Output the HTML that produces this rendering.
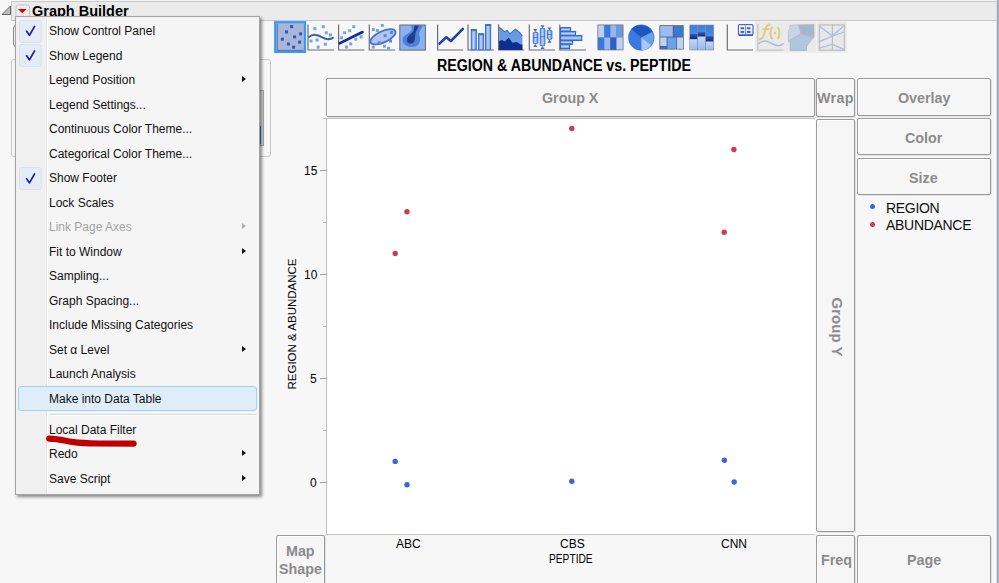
<!DOCTYPE html>
<html><head><meta charset="utf-8">
<style>
*{box-sizing:border-box;margin:0;padding:0}
html,body{width:999px;height:583px;overflow:hidden;background:#f7f7f7;font-family:"Liberation Sans",sans-serif;color:#000}
.a{position:absolute}
.t{position:absolute;white-space:nowrap;line-height:12px;font-size:12px}
.tb{position:absolute;white-space:nowrap;line-height:14px;font-size:14px;font-weight:bold}
.dz{position:absolute;border-radius:2px;border:1px solid #9a9a9a;box-shadow:inset 1px 1px 0 #fdfdfd,1px 1px 0 #e2e2e2;background:#f6f6f6}
.dzt{position:absolute;white-space:nowrap;line-height:14px;font-size:14.3px;font-weight:bold;color:#8b8b8b}
.mi{position:absolute;left:49px;white-space:nowrap;line-height:12px;font-size:12px;color:#111}
.chk{position:absolute;left:19px;width:23px;height:23px;border:1px solid #d9e1ee;border-radius:3px;background:#e6ecf5}
.arr{position:absolute;left:242px;width:0;height:0;border-top:3.5px solid transparent;border-bottom:3.5px solid transparent;border-left:4.8px solid #101010}
</style></head><body>

<!-- window right edge -->
<div class="a" style="left:996px;top:0;width:1px;height:583px;background:#dcdcdc"></div><div class="a" style="left:997px;top:0;width:2px;height:583px;background:#a2aebb"></div>

<!-- header bar -->
<div class="a" style="left:11px;top:1px;width:986px;height:20px;background:#ebebeb;border:1px solid #c9c9c9;border-right:1px solid #d8d8d8"></div>
<svg class="a" style="left:0;top:0" width="32" height="20">
  <polygon points="10.5,6 10.5,14.5 2,14.5" fill="#bdbdbd" stroke="#6a6a6a" stroke-width="1"/>
  <rect x="16" y="5" width="13.5" height="14" rx="2" fill="#ededed" stroke="#c4c4c4"/>
  <polygon points="18,9 26.5,9 22.25,13.3" fill="#e00000"/>
</svg>
<div class="tb" style="left:32px;top:4px;color:#000;font-size:14.5px">Graph Builder</div>

<!-- left control panel remnants -->
<div class="a" style="left:11px;top:59px;width:260px;height:98px;border:1px solid #c8c8c8;border-radius:3px"></div>
<div class="a" style="left:13px;top:25px;width:6px;height:22px;border:1px solid #8a8a8a;border-radius:3px"></div>
<div class="a" style="left:240px;top:90px;width:24px;height:56px;border:1px solid #a8a8a8;background:#dcdcdc"></div>
<div class="a" style="left:259px;top:126px;width:2px;height:18px;background:#3070d0"></div>

<!-- toolbar icons -->
<svg class="a" style="left:0;top:0" width="860" height="60">
  <defs>
    <linearGradient id="barg" x1="0" x2="1" y1="0" y2="0">
      <stop offset="0" stop-color="#6594e6"/><stop offset="0.45" stop-color="#bcd4fb"/><stop offset="1" stop-color="#6594e6"/>
    </linearGradient>
    <linearGradient id="hbarg" x1="0" x2="0" y1="0" y2="1">
      <stop offset="0" stop-color="#5a8ae2"/><stop offset="0.5" stop-color="#bcd4fb"/><stop offset="1" stop-color="#5a8ae2"/>
    </linearGradient>
  </defs>
  <!-- 1 selected points -->
  <rect x="275.2" y="22.2" width="29.8" height="29.7" fill="#a9b6d8" stroke="#3399ff" stroke-width="2.2"/>
  <path d="M277.3 24 V50.4 H303.6" fill="none" stroke="#6a7190" stroke-width="1"/>
  <g fill="#2b58c0">
    <rect x="290.1" y="25.1" width="3" height="3"/><rect x="285" y="30.4" width="3" height="3"/>
    <rect x="299.1" y="32.4" width="3" height="3"/><rect x="293.1" y="35.4" width="3" height="3"/>
    <rect x="280.9" y="37.7" width="3" height="3"/><rect x="298.1" y="40.6" width="3" height="3"/>
    <rect x="287" y="42.5" width="3" height="3"/><rect x="292.1" y="45.7" width="3" height="3"/>
  </g>
  <!-- axes for plain icons -->
  <g fill="none" stroke="#6e6e6e" stroke-width="1.2">
    <path d="M308 24.4 V50 H334"/>
    <path d="M338.6 24.4 V50 H364.3"/>
    <path d="M369.3 24.4 V50 H395"/>
    <path d="M437.6 24.4 V50 H463.2"/>
    <path d="M468 24.4 V50 H494"/>
    <path d="M498.6 24.4 V50 H524.2"/>
    <path d="M529.3 24.4 V50 H555"/>
    <path d="M559.8 24.4 V50 H586"/>
    <path d="M727.3 24.4 V50 H753"/>
  </g>
  <!-- 2 smoother -->
  <g fill="#7ba2e2">
    <rect x="313.4" y="27.2" width="3" height="3"/><rect x="321.7" y="25.2" width="3" height="3"/>
    <rect x="324.8" y="31.3" width="3" height="3"/><rect x="328.9" y="33.4" width="3" height="3"/>
    <rect x="309.5" y="39.5" width="3" height="3"/><rect x="315.6" y="38.5" width="3" height="3"/>
    <rect x="323.8" y="42.7" width="3" height="3"/><rect x="316.6" y="45.6" width="3" height="3"/>
  </g>
  <path d="M308.3 37.5 C311 35.2 314 34.6 316 34.9 C321 35.5 324 39.3 328 39.2 C330.5 39.1 332 38.6 333.6 37.4" fill="none" stroke="#3a5fb2" stroke-width="2"/>
  <!-- 3 line fit -->
  <g fill="#7ba2e2">
    <rect x="352.3" y="25.2" width="3" height="3"/><rect x="348.2" y="29.3" width="3" height="3"/>
    <rect x="343.1" y="31.3" width="3" height="3"/><rect x="340" y="36.3" width="3" height="3"/>
    <rect x="359.6" y="35.4" width="3" height="3"/><rect x="354.3" y="37.7" width="3" height="3"/>
    <rect x="349.2" y="42.4" width="3" height="3"/><rect x="345" y="45.5" width="3" height="3"/>
  </g>
  <path d="M339.5 43.3 L362.5 32" fill="none" stroke="#0c2c9c" stroke-width="2.6" stroke-linecap="round"/>
  <!-- 4 ellipse -->
  <g fill="#7ba2e2">
    <rect x="380.8" y="24" width="3" height="3"/><rect x="371.8" y="28.1" width="3" height="3"/>
    <rect x="375.9" y="29" width="3" height="3"/><rect x="382.9" y="44.7" width="3" height="3"/>
    <rect x="371.8" y="45.6" width="3" height="3"/><rect x="387" y="46.8" width="3" height="3"/>
  </g>
  <ellipse cx="383" cy="36.8" rx="13.6" ry="5.6" transform="rotate(-25 383 36.8)" fill="#b4c6f0" stroke="#3a72e0" stroke-width="1.8"/>
  <g fill="#5c88dc">
    <rect x="389.9" y="31" width="3" height="3"/><rect x="383.7" y="34.2" width="3" height="3"/>
    <rect x="389" y="39.5" width="3" height="3"/><rect x="377.6" y="41.2" width="3" height="3"/>
  </g>
  <!-- 5 contour -->
  <rect x="399.8" y="25" width="25.6" height="25.1" fill="#8ab0f2" stroke="#6c6c6c" stroke-width="1"/>
  <path d="M410.9 25.5 H423.2 C421.5 29 419.5 31 419.1 33.3 C418.6 35 420.5 37.5 420.1 40 C419.8 42.5 418.6 44.6 416.5 46 C413.4 47.6 408.3 47.4 405.5 45.3 C403 43.6 402.2 41 402.4 39.5 C402.8 37 404 36 406 34.8 C409 33 411 31.5 411.8 29.5 C412 28 411.5 26.5 410.9 25.5 Z" fill="#4f80dc"/>
  <path d="M414.5 25.5 H419.1 C418 28 416.5 30 416 31.5 C415 34 415.2 36.5 415 38.4 C414.8 40.5 414 42.5 411.4 43.6 C409.2 44 407.8 43 407.2 41.5 C406.6 39.5 407.2 37.5 408.5 36 C410.5 34 413 32.5 413.6 30.5 C414 29 414.2 27 414.5 25.5 Z" fill="#1d3f8c"/>
  <!-- 6 line chart -->
  <path d="M439.5 43.6 L446.3 37.2 L450.9 41 L462.9 28.8" fill="none" stroke="#1a40b0" stroke-width="2.5" stroke-linecap="round" stroke-linejoin="round"/>
  <!-- 7 bars -->
  <g stroke="#3f70d8" stroke-width="1.1" fill="url(#barg)">
    <rect x="471.3" y="29.8" width="5" height="20"/>
    <rect x="478.6" y="33.9" width="5" height="15.9"/>
    <rect x="485.6" y="24.6" width="5" height="25.2"/>
  </g>
  <g fill="#3a6cd4"><rect x="470.8" y="29.3" width="6" height="1.8"/><rect x="478.1" y="33.4" width="6" height="1.8"/><rect x="485.1" y="24.1" width="6" height="1.8"/></g>
  <!-- 8 area -->
  <path d="M499.1 27.3 L504.3 31.7 L507.3 30.5 L509.9 34 L515.4 29.3 L519.5 32.5 L522.4 35.8 V50 H499.1 Z" fill="#6a9ae2"/>
  <path d="M499.1 27.3 L504.3 31.7 L507.3 30.5 L509.9 34 L515.4 29.3 L519.5 32.5 L522.4 35.8" fill="none" stroke="#3a70d8" stroke-width="1.2"/>
  <path d="M499.1 41 L502 40.1 L504.6 41.6 L508.7 37.8 L512.5 42.8 L516.6 41.9 L520.7 44.5 L522.4 44.5 V50 H499.1 Z" fill="#0b2f8a"/>
  <!-- 9 box plots -->
  <g fill="#3a6cd4">
    <path d="M533.3 29.1 H537.3 L535.3 32 Z M533.3 47 H537.3 L535.3 44 Z"/>
    <path d="M540.5 25.3 H544.5 L542.5 28.3 Z M540.5 49.1 H544.5 L542.5 46 Z"/>
    <path d="M547.5 27.4 H551.5 L549.5 30.3 Z M547.5 42.7 H551.5 L549.5 39.5 Z"/>
  </g>
  <g fill="url(#barg)" stroke="#3a70d8" stroke-width="1">
    <rect x="533.3" y="32.3" width="4.6" height="11.3" rx="1"/>
    <rect x="540.3" y="28.3" width="4.6" height="17.4" rx="1"/>
    <rect x="547.3" y="30.3" width="4.6" height="9" rx="1"/>
  </g>
  <g stroke="#3a70d8" stroke-width="0.8"><path d="M533.3 37.5 H538 M540.3 36.7 H545 M547.3 34.5 H552"/></g>
  <!-- 10 histogram -->
  <g fill="url(#hbarg)" stroke="#3468d4" stroke-width="1.2">
    <rect x="560.5" y="27.6" width="10" height="3.8"/>
    <rect x="560.5" y="31.5" width="15" height="4"/>
    <rect x="560.5" y="35.6" width="21.2" height="4.8"/>
    <rect x="560.5" y="40.5" width="12" height="3.7"/>
    <rect x="560.5" y="44.3" width="9" height="4.3"/>
  </g>
  <!-- 11 heatmap -->
  <rect x="597.4" y="24.5" width="26.1" height="25.8" fill="#777"/>
  <rect x="598.2" y="25.3" width="6.2" height="12.3" fill="#b8d0fa"/>
  <rect x="604.3" y="25.3" width="6.1" height="12.3" fill="#3a7ae0"/>
  <rect x="610.4" y="25.3" width="6.1" height="12.3" fill="#94b8f0"/>
  <rect x="616.5" y="25.3" width="6.2" height="12.3" fill="#6a98e0"/>
  <rect x="598.2" y="37.5" width="6.2" height="12" fill="#3a78e0"/>
  <rect x="604.3" y="37.5" width="6.1" height="12" fill="#94b8f0"/>
  <rect x="610.4" y="37.5" width="6.1" height="12" fill="#2f5fc0"/>
  <rect x="616.5" y="37.5" width="6.2" height="12" fill="#b8d2fa"/>
  <!-- 12 pie -->
  <g transform="translate(641.3 37.6)">
    <circle r="13.1" fill="#3a7ae0"/>
    <path d="M0 0 L-10 -8.5 A13.1 13.1 0 0 1 11 -5.7 Z" fill="#1f55c0"/>
    <path d="M0 0 L11 -5.7 A13.1 13.1 0 0 1 9.8 7.5 Z" fill="#6aa2e8"/>
    <path d="M0 0 L9.8 7.5 A13.1 13.1 0 0 1 0.3 13.1 Z" fill="#a8c8fa"/>
  </g>
  <!-- 13 treemap -->
  <rect x="659.4" y="25.2" width="24.3" height="24.3" fill="#5a5a5a"/>
  <rect x="660.2" y="26" width="12.6" height="10.6" fill="#9abcf0"/>
  <rect x="673.7" y="26" width="9.3" height="10.6" fill="#3a78d8"/>
  <rect x="660.2" y="37.4" width="6.4" height="8.6" fill="#b8d2fa"/>
  <rect x="660.2" y="46.6" width="6.4" height="2.2" fill="#3070d0"/>
  <rect x="667.4" y="37.4" width="8.8" height="11.4" fill="#6aa0f0"/>
  <rect x="676.9" y="37.4" width="6.1" height="11.4" fill="#b8d2fa"/>
  <!-- 14 mosaic -->
  <linearGradient id="mt" x1="0" x2="0" y1="0" y2="1"><stop offset="0" stop-color="#3a7ce0"/><stop offset="1" stop-color="#4a8ae8"/></linearGradient>
  <linearGradient id="md" x1="0" x2="0" y1="0" y2="1"><stop offset="0" stop-color="#2a58b8"/><stop offset="1" stop-color="#0a2a88"/></linearGradient>
  <linearGradient id="ml" x1="0" x2="0" y1="0" y2="1"><stop offset="0" stop-color="#c4dafc"/><stop offset="1" stop-color="#98b8f0"/></linearGradient>
  <rect x="689.4" y="24.7" width="24.5" height="25.6" fill="#8a8a8a"/>
  <g>
    <rect x="690" y="25.3" width="7.2" height="8.8" fill="url(#mt)"/>
    <rect x="690" y="34" width="7.2" height="5.3" fill="url(#md)"/>
    <rect x="690" y="39.3" width="7.2" height="10.4" fill="url(#ml)"/>
    <rect x="697.9" y="25.3" width="7.2" height="7" fill="url(#mt)"/>
    <rect x="697.9" y="32.3" width="7.2" height="4.4" fill="url(#md)"/>
    <rect x="697.9" y="36.6" width="7.2" height="13.1" fill="url(#ml)"/>
    <rect x="705.9" y="25.3" width="7.4" height="11" fill="url(#mt)"/>
    <rect x="705.9" y="36.3" width="7.4" height="5.3" fill="url(#md)"/>
    <rect x="705.9" y="41.6" width="7.4" height="8.1" fill="url(#ml)"/>
  </g>
  <!-- 15 caption -->
  <linearGradient id="capg" x1="0" x2="0" y1="0" y2="1"><stop offset="0" stop-color="#ffffff"/><stop offset="1" stop-color="#d6e0f6"/></linearGradient>
  <rect x="738.4" y="24.6" width="14.6" height="10.4" rx="1.2" fill="url(#capg)" stroke="#4a6cd2" stroke-width="1.2"/>
  <rect x="738.6" y="34.6" width="14.3" height="1.3" fill="#2f50b4"/>
  <g fill="#3a5cc4"><rect x="740.6" y="27.3" width="3.6" height="1.9"/><rect x="740.6" y="31" width="3.6" height="1.9"/><rect x="746.8" y="27.3" width="3.6" height="1.9"/><rect x="746.8" y="31" width="3.6" height="1.9"/><rect x="745.2" y="25.2" width="0.8" height="9.4" fill="#6a84d6"/></g>
  <!-- disabled group -->
  <rect x="755" y="21.6" width="91.7" height="31" fill="#e9e9e9"/>
  <rect x="785.5" y="21.6" width="1" height="31" fill="#f0f0f0"/>
  <rect x="816" y="21.6" width="1" height="31" fill="#f0f0f0"/>
  <path d="M757.8 24.4 V50.2 H783.6" fill="none" stroke="#c4c4c4" stroke-width="1.2"/>
  <path d="M759.6 39.2 C761.8 39.4 763 37.5 764 34 L766.2 27.5 C767 25.2 768 24.4 769.8 24.5 M763.2 29.2 H768.6" fill="none" stroke="#e2c97c" stroke-width="1.9" stroke-linecap="round"/>
  <path d="M772.3 26.8 C769.8 30 769.8 36 772.3 39.3 M777.6 26.8 C780.1 30 780.1 36 777.6 39.3" fill="none" stroke="#e2c97c" stroke-width="1.9"/>
  <circle cx="775" cy="33" r="1.3" fill="#e2c97c"/>
  <path d="M758.2 43.8 C761 41.5 763 40.8 765 40.9 C770 41.3 774 45.8 778 45.7 C780.5 45.6 782 44.5 783.6 43.4" fill="none" stroke="#a9bde2" stroke-width="1.5"/>
  <path d="M790 25.4 L813.9 24.7 L813.9 36.8 L806.5 46.2 L806.5 50.5 L790.2 50.5 L790.2 42.1 L788.4 41.5 L788.4 30.4 L790 30 Z" fill="#b1c4e0" stroke="#b9b9b9" stroke-width="1"/>
  <path d="M790 25.4 L798.4 24.7 L801 33.5 L788.8 41.5 L788.4 30.4 L790 30 Z" fill="#c6d4ea"/>
  <path d="M798.4 24.7 L813.9 24.7 L813.9 36.8 L801 33.5 Z" fill="#a4b5d2"/>
  <path d="M798.4 24.7 L801 33.5 L788.8 41.5 M801 33.5 L812.5 37.8" fill="none" stroke="#b9b9b9" stroke-width="1"/>
  <rect x="819.4" y="24.9" width="25" height="25.3" fill="#e8e8e8" stroke="#c2c2c2" stroke-width="1.4"/>
  <path d="M832.4 24.9 V50.2" stroke="#bdbdbd" stroke-width="1.2"/>
  <g fill="none" stroke="#a9c0e8" stroke-width="1.4">
    <path d="M819.6 26.4 L832.3 35.8 L843.7 26"/>
    <path d="M819.6 41.5 L832.3 36.1 L843.7 32.1"/>
    <path d="M819.6 48.2 L832.3 44.2 L843.7 49.5"/>
  </g>
</svg>


<!-- title -->
<div class="tb" style="left:437px;top:58.6px;font-size:15.6px;transform:scaleX(0.912);transform-origin:0 0">REGION &amp; ABUNDANCE vs. PEPTIDE</div>

<!-- drop zones -->
<div class="dz" style="left:326px;top:78px;width:489px;height:39px"></div>
<div class="dzt" style="left:542px;top:91px">Group X</div>
<div class="dz" style="left:816px;top:78px;width:39px;height:39px"></div>
<div class="dzt" style="left:817px;top:91px;letter-spacing:0.3px">Wrap</div>
<div class="dz" style="left:857px;top:78px;width:134px;height:38px"></div>
<div class="dzt" style="left:898px;top:91px">Overlay</div>
<div class="dz" style="left:857px;top:118px;width:134px;height:37px"></div>
<div class="dzt" style="left:905px;top:131px">Color</div>
<div class="dz" style="left:857px;top:158px;width:134px;height:37px"></div>
<div class="dzt" style="left:909px;top:171px">Size</div>
<div class="dz" style="left:816px;top:119px;width:39px;height:413px"></div>
<div class="dzt" style="left:807px;top:319.5px;width:60px;text-align:center;font-size:15px;transform:rotate(90deg)">Group Y</div>
<div class="dz" style="left:816px;top:535px;width:39px;height:60px"></div>
<div class="dzt" style="left:821px;top:553px">Freq</div>
<div class="dz" style="left:857px;top:535px;width:134px;height:60px"></div>
<div class="dzt" style="left:907px;top:553px">Page</div>
<div class="dz" style="left:276px;top:535px;width:49px;height:60px"></div>
<div class="dzt" style="left:286px;top:544px">Map</div>
<div class="dzt" style="left:279px;top:562px">Shape</div>

<!-- legend -->
<div class="a" style="left:870px;top:204px;width:5px;height:5px;border-radius:50%;background:#3b68d8"></div>
<div class="a" style="left:870px;top:221.5px;width:5px;height:5px;border-radius:50%;background:#d03a55"></div>
<div class="t" style="left:886px;top:201px;font-size:14px;line-height:14px;letter-spacing:-0.3px;color:#111">REGION</div>
<div class="t" style="left:886px;top:218px;font-size:14px;line-height:14px;letter-spacing:-0.3px;color:#111">ABUNDANCE</div>

<!-- graph -->
<div class="a" style="left:327px;top:119px;width:488px;height:415px;background:#fff"></div>
<div class="a" style="left:323px;top:118px;width:492px;height:1px;background:#c4c4c4"></div>
<div class="a" style="left:326px;top:118px;width:1px;height:417px;background:#bdbdbd"></div>
<div class="a" style="left:326px;top:534px;width:489px;height:1px;background:#c8c8c8"></div>
<!-- ticks -->
<div class="a" style="left:320px;top:170px;width:6px;height:1px;background:#a0a0a0"></div>
<div class="a" style="left:323px;top:222px;width:3px;height:1px;background:#b0b0b0"></div>
<div class="a" style="left:320px;top:274px;width:6px;height:1px;background:#a0a0a0"></div>
<div class="a" style="left:323px;top:326px;width:3px;height:1px;background:#b0b0b0"></div>
<div class="a" style="left:320px;top:378px;width:6px;height:1px;background:#a0a0a0"></div>
<div class="a" style="left:323px;top:430px;width:3px;height:1px;background:#b0b0b0"></div>
<div class="a" style="left:320px;top:482px;width:6px;height:1px;background:#a0a0a0"></div>
<div class="t" style="left:304px;top:165px">15</div>
<div class="t" style="left:304px;top:269px">10</div>
<div class="t" style="left:310px;top:373px">5</div>
<div class="t" style="left:310px;top:477px">0</div>
<div class="t" style="left:226px;top:318px;width:132px;height:12px;text-align:center;font-size:11.5px;transform:rotate(-90deg)">REGION &amp; ABUNDANCE</div>
<div class="t" style="left:396px;top:538px">ABC</div>
<div class="t" style="left:560px;top:538px">CBS</div>
<div class="t" style="left:721px;top:538px">CNN</div>
<div class="t" style="left:549px;top:553px;transform:scaleX(0.85);transform-origin:0 0">PEPTIDE</div>
<!-- points -->
<svg class="a" style="left:0;top:0" width="999" height="583">
  <g fill="#d0394f">
    <circle cx="395.2" cy="253.5" r="2.7"/>
    <circle cx="407" cy="211.7" r="2.7"/>
    <circle cx="571.8" cy="128.5" r="2.7"/>
    <circle cx="724.2" cy="232.3" r="2.7"/>
    <circle cx="733.9" cy="149.5" r="2.7"/>
  </g>
  <g fill="#3966d9">
    <circle cx="395.2" cy="461.4" r="2.7"/>
    <circle cx="407" cy="484.7" r="2.7"/>
    <circle cx="571.8" cy="481.3" r="2.7"/>
    <circle cx="724.4" cy="460.3" r="2.7"/>
    <circle cx="734.2" cy="482" r="2.7"/>
  </g>
</svg>

<!-- menu -->
<div class="a" style="left:15px;top:16px;width:245px;height:479px;background:#f5f5f5;border:1px solid #a4a4a4;box-shadow:2px 2px 3px rgba(0,0,0,0.45)">
  <div class="a" style="left:0;top:0;width:30px;height:477px;background:#f0f0f0"></div>
  <div class="a" style="left:30px;top:0;width:1px;height:477px;background:#e2e3e3"></div>
  <div class="a" style="left:31px;top:0;width:1px;height:477px;background:#ffffff"></div>
</div>
<div class="chk" style="top:20px"></div>
<div class="chk" style="top:44px"></div>
<div class="chk" style="top:167px"></div>
<svg class="a" style="left:0;top:0" width="60" height="200">
  <g fill="none" stroke="#1a1ab0" stroke-width="1.7" stroke-linecap="round" stroke-linejoin="round">
    <path d="M26.6 31.2 L29.4 35.4 L34.6 26.4"/>
    <path d="M26.6 55.7 L29.4 59.9 L34.6 50.9"/>
    <path d="M26.6 178.7 L29.4 182.9 L34.6 173.9"/>
  </g>
</svg>
<div class="a" style="left:18px;top:386px;width:239px;height:25px;border:1px solid #a6d2f0;border-radius:3px;background:#deedf8"></div>
<div class="a" style="left:49px;top:414px;width:207px;height:1px;background:#dadada"></div>
<div class="a" style="left:49px;top:415px;width:207px;height:1px;background:#ffffff"></div>

<div class="mi" style="top:25px">Show Control Panel</div>
<div class="mi" style="top:50px">Show Legend</div>
<div class="mi" style="top:74px">Legend Position</div>
<div class="mi" style="top:99px">Legend Settings...</div>
<div class="mi" style="top:123px">Continuous Color Theme...</div>
<div class="mi" style="top:148px">Categorical Color Theme...</div>
<div class="mi" style="top:172px">Show Footer</div>
<div class="mi" style="top:197px">Lock Scales</div>
<div class="mi" style="top:221px;color:#a3a3a3">Link Page Axes</div>
<div class="mi" style="top:246px">Fit to Window</div>
<div class="mi" style="top:270px">Sampling...</div>
<div class="mi" style="top:295px">Graph Spacing...</div>
<div class="mi" style="top:319px">Include Missing Categories</div>
<div class="mi" style="top:344px">Set α Level</div>
<div class="mi" style="top:368px">Launch Analysis</div>
<div class="mi" style="top:393px">Make into Data Table</div>
<div class="mi" style="top:424px">Local Data Filter</div>
<div class="mi" style="top:448px">Redo</div>
<div class="mi" style="top:473px">Save Script</div>

<div class="arr" style="top:76px"></div>
<div class="arr" style="top:223px;border-left-color:#b0b0b0"></div>
<div class="arr" style="top:248px"></div>
<div class="arr" style="top:346px"></div>
<div class="arr" style="top:450px"></div>
<div class="arr" style="top:475px"></div>

<svg class="a" style="left:0;top:0" width="200" height="500">
  <path d="M49.2 438.7 C58 439 64 440.6 72 441.9 C80 443 88 443.4 98 443.5 L133.6 443.6" fill="none" stroke="#bf0000" stroke-width="6.2" stroke-linecap="round" stroke-linejoin="round"/>
</svg>

</body></html>
